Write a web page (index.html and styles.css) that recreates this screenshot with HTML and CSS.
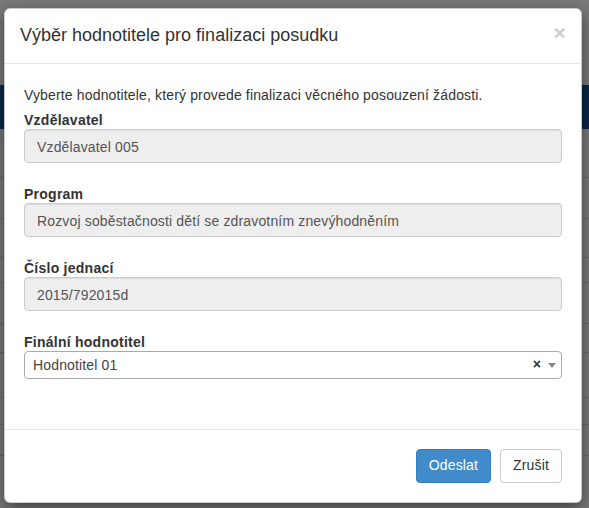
FILE: index.html
```html
<!DOCTYPE html>
<html lang="cs">
<head>
<meta charset="utf-8">
<title>Výběr hodnotitele</title>
<link rel="stylesheet" href="styles.css">
</head>
<body>
<div class="page">
  <div class="page-top"></div>
  <div class="page-nav"></div>
  <div class="page-table">
    <div class="row r1"></div>
    <div class="row r2"></div>
    <div class="row r3"></div>
    <div class="row r4"></div>
    <div class="row r5"></div>
    <div class="row r6"></div>
    <div class="row r7"></div>
    <div class="row r8"></div>
    <div class="row r9"></div>
  </div>
</div>

<div class="modal">
  <div class="modal-header">
    <span class="close">×</span>
    <h4 class="modal-title">Výběr hodnotitele pro finalizaci posudku</h4>
  </div>
  <div class="modal-body">
    <p class="intro">Vyberte hodnotitele, který provede finalizaci věcného posouzení žádosti.</p>
    <div class="form-group">
      <label class="label">Vzdělavatel</label>
      <div class="form-control">Vzdělavatel 005</div>
    </div>
    <div class="form-group">
      <label class="label">Program</label>
      <div class="form-control">Rozvoj soběstačnosti dětí se zdravotním znevýhodněním</div>
    </div>
    <div class="form-group">
      <label class="label">Číslo jednací</label>
      <div class="form-control">2015/792015d</div>
    </div>
    <div class="form-group">
      <label class="label">Finální hodnotitel</label>
      <div class="select">
        <span class="select-value">Hodnotitel 01</span>
        <span class="select-clear">×</span>
        <span class="select-arrow"></span>
      </div>
    </div>
  </div>
  <div class="modal-footer">
    <button class="btn btn-primary">Odeslat</button>
    <button class="btn btn-default">Zrušit</button>
  </div>
</div>
</body>
</html>
```

FILE: styles.css
```css
html, body {
  margin: 0;
  padding: 0;
}

body {
  background: #7a7a7a;
  font-family: "Liberation Sans", Arial, sans-serif;
  font-size: 14px;
  line-height: 1.42857;
  letter-spacing: 0.15px;
  color: #333;
  height: 508px;
  overflow: hidden;
}

.page {
  display: flex;
  flex-direction: column;
}

.page-top {
  height: 85px;
}

.page-nav {
  height: 44px;
  background: #0a2747;
}

.page-table {
  display: flex;
  flex-direction: column;
}

.row {
  border-bottom: 1px solid #6a6a6a;
}

.r1 { height: 48px; }
.r2 { height: 40px; }
.r3 { height: 38px; }
.r4 { height: 24px; }
.r5 { height: 40px; }
.r6 { height: 28px; }
.r7 { height: 44px; }
.r8 { height: 26px; }
.r9 { height: 30px; }

.modal {
  position: absolute;
  top: 8px;
  left: 4px;
  width: 578px;
  box-sizing: border-box;
  background: #fff;
  border: 1px solid rgba(0, 0, 0, 0.2);
  border-radius: 6px;
  box-shadow: 0 5px 15px rgba(0, 0, 0, 0.5);
}

.modal-header {
  padding: 14px 15px 14px;
  border-bottom: 1px solid #e5e5e5;
}

.modal-title {
  margin: 0;
  font-size: 18px;
  font-weight: normal;
  line-height: 1.42857;
  letter-spacing: 0;
  color: #333;
}

.close {
  float: right;
  font-size: 21px;
  font-weight: bold;
  line-height: 1;
  color: #000;
  opacity: 0.2;
  margin-top: -1px;
}

.modal-body {
  padding: 21px 19px 30px;
}

.intro {
  margin: 0 0 4px;
  line-height: 20px;
}

.form-group {
  margin-bottom: 20px;
}

.label {
  display: block;
  font-weight: bold;
  letter-spacing: 0.25px;
  line-height: 18px;
  padding-top: 2px;
  margin: 0;
}

.form-control {
  height: 34px;
  box-sizing: border-box;
  padding: 7px 12px 5px;
  line-height: 20px;
  background: #eee;
  border: 1px solid #ccc;
  border-radius: 4px;
  color: #555;
  box-shadow: inset 0 1px 1px rgba(0, 0, 0, 0.075);
  white-space: nowrap;
}

.select {
  height: 28px;
  box-sizing: border-box;
  border: 1px solid #aaa;
  border-radius: 4px;
  background: #fff;
  display: flex;
  align-items: center;
  padding: 1px 4px 0 8px;
}

.select-value {
  flex: 1;
  color: #444;
  line-height: 26px;
}

.select-clear {
  font-weight: bold;
  color: #333;
  font-size: 14px;
  margin-right: 7px;
}

.select-arrow {
  width: 0;
  height: 0;
  border-left: 4px solid transparent;
  border-right: 4px solid transparent;
  border-top: 5px solid #888;
  margin-right: 1px;
}

.modal-footer {
  padding: 19px 19px 19px;
  border-top: 1px solid #e5e5e5;
  display: flex;
  justify-content: flex-end;
  gap: 9px;
}

.btn {
  font-family: "Liberation Sans", Arial, sans-serif;
  font-size: 14px;
  line-height: 1.42857;
  letter-spacing: 0.15px;
  padding: 6px 12px;
  border-radius: 4px;
  border: 1px solid transparent;
  height: 34px;
  box-sizing: border-box;
  margin: 0;
}

.btn-primary {
  background: #428bca;
  border-color: #357ebd;
  color: #fff;
}

.btn-default {
  background: #fff;
  border-color: #ccc;
  color: #333;
}
```
